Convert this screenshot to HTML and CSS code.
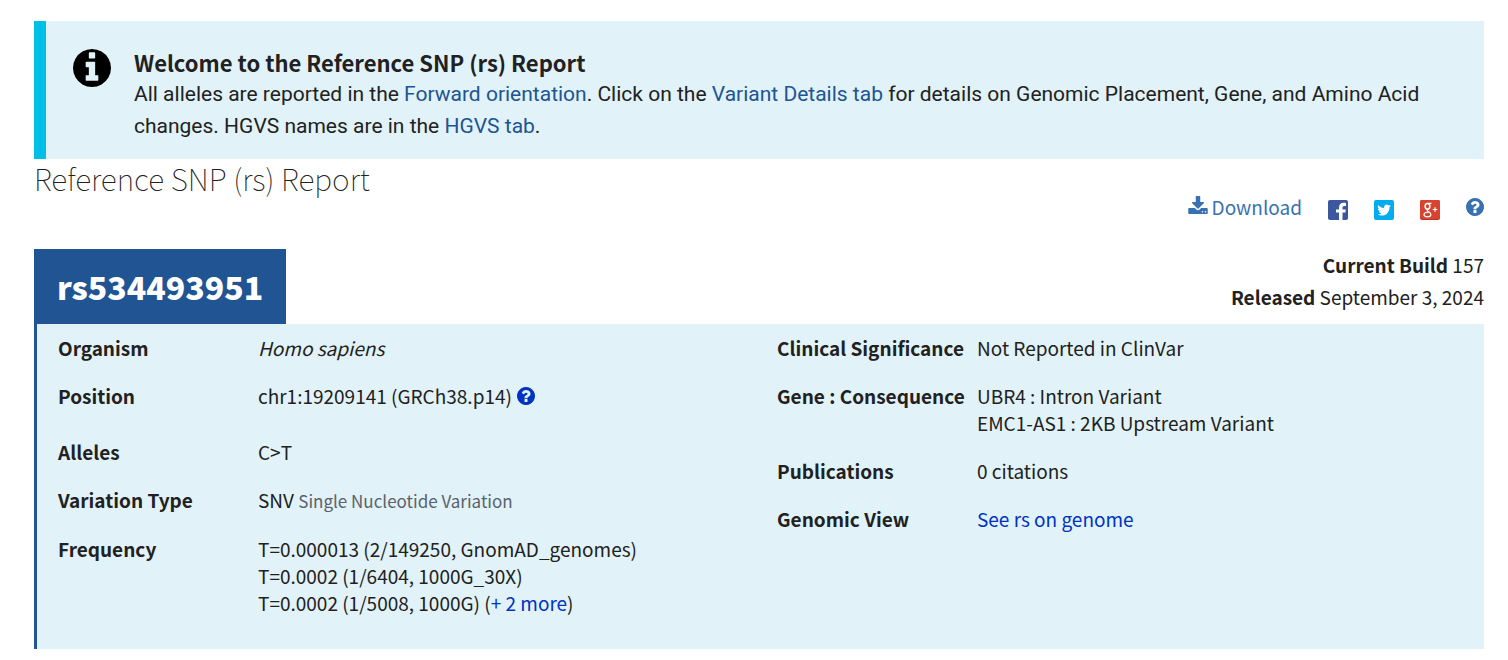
FILE: index.html
```
<!DOCTYPE html>
<html lang="en">
<head>
<meta charset="utf-8">
<meta name="viewport" content="width=device-width, initial-scale=1">
<title>rs534493951 - Reference SNP (rs) Report</title>
<link rel="stylesheet" href="styles.css">
</head>
<body>
<svg class="sprite" aria-hidden="true">
  <symbol id="question" viewBox="0 128 1536 1536"><path d="M896 1376v-192q0-14-9-23t-23-9h-192q-14 0-23 9t-9 23v192q0 14 9 23t23 9h192q14 0 23-9t9-23zm256-672q0-88-55.5-163t-138.5-116-170-41q-243 0-371 213-15 24 8 42l132 100q7 6 19 6 16 0 25-12 53-68 86-92 34-24 86-24 48 0 85.5 26t37.5 59q0 38-20 61t-68 45q-63 28-115.5 86.5t-52.5 125.5v36q0 14 9 23t23 9h192q14 0 23-9t9-23q0-19 21.5-49.5t54.5-49.5q32-18 49-28.5t46-35 44.5-48 28-60.5 12.5-81zm384 192q0 209-103 385.5t-279.5 279.5-385.5 103-385.5-103-279.5-279.5-103-385.5 103-385.5 279.5-279.5 385.5-103 385.5 103 279.5 279.5 103 385.5z"/></symbol>
</svg>
<main class="page">
  <section class="banner">
    <svg class="banner-icon" viewBox="0 128 1536 1536" aria-hidden="true"><path d="M1024 1376v-160q0-14-9-23t-23-9h-96v-512q0-14-9-23t-23-9h-320q-14 0-23 9t-9 23v160q0 14 9 23t23 9h96v320h-96q-14 0-23 9t-9 23v160q0 14 9 23t23 9h448q14 0 23-9t9-23zm-128-896v-192q0-14-9-23t-23-9h-192q-14 0-23 9t-9 23v192q0 14 9 23t23 9h192q14 0 23-9t9-23zm640 416q0 209-103 385.5t-279.5 279.5-385.5 103-385.5-103-279.5-279.5-103-385.5 103-385.5 279.5-279.5 385.5-103 385.5 103 279.5 279.5 103 385.5z"/></svg>
    <div class="banner-body">
      <h2 class="banner-title">Welcome to the Reference SNP (rs) Report</h2>
      <p class="banner-text">All alleles are reported in the <a href="#orientation">Forward orientation</a>. Click on the <a href="#details">Variant Details tab</a> for details on Genomic Placement, Gene, and Amino Acid changes. HGVS names are in the <a href="#hgvs">HGVS tab</a>.</p>
    </div>
  </section>

  <h1 class="report-title">Reference SNP (rs) Report</h1>

  <nav class="toolbar" aria-label="Report actions">
    <a class="download" href="#download">
      <svg class="download-icon" viewBox="0 0 1664 1536" aria-hidden="true"><path d="M1280 1344q0-26-19-45t-45-19-45 19-19 45 19 45 45 19 45-19 19-45zm256 0q0-26-19-45t-45-19-45 19-19 45 19 45 45 19 45-19 19-45zm128-224v320q0 40-28 68t-68 28h-1472q-40 0-68-28t-28-68v-320q0-40 28-68t68-28h465l135 136q58 56 136 56t136-56l136-136h464q40 0 68 28t28 68zm-325-569q17 41-14 70l-448 448q-18 19-45 19t-45-19l-448-448q-31-29-14-70 17-39 59-39h256v-448q0-26 19-45t45-19h256q26 0 45 19t19 45v448h256q42 0 59 39z"/></svg>
      <span>Download</span>
    </a>
    <a class="share" href="#facebook" aria-label="Share on Facebook">
      <svg class="share-icon" viewBox="0 0 20 20"><rect width="20" height="20" rx="2" fill="#3b579d"/><path fill="#fff" d="M11 20v-7.500H8V9.500H11V7.500C11 4.500 12.800 2.800 15.600 2.800c1.200 0 2 .1 2.400.2v2.900h-1.600c-1.500 0-1.900.7-1.900 1.800v1.800h3.300l-.4 3h-2.900V20z"/></svg>
    </a>
    <a class="share" href="#twitter" aria-label="Share on Twitter">
      <svg class="share-icon" viewBox="0 0 20 20"><rect width="20" height="20" rx="2" fill="#00abf0"/><path fill="#fff" transform="translate(2.400 2.400) scale(.0086)" d="M1684 408q-67 98-162 167 1 14 1 42 0 130-38 259.500t-115.500 248.500-184.500 210.500-258 146-323 54.500q-271 0-496-145 35 4 78 4 225 0 401-138-105-2-188-64.500t-114-159.500q33 5 61 5 43 0 85-11-112-23-185.500-111.500t-73.500-205.500v-4q68 38 146 41-66-44-105-115t-39-154q0-88 44-163 121 149 294.500 238.500t371.500 99.500q-8-38-8-74 0-134 94.500-228.500t228.500-94.500q140 0 236 102 109-21 205-78-37 115-142 178 93-10 186-50z"/></svg>
    </a>
    <a class="share" href="#google-plus" aria-label="Share on Google Plus">
      <svg class="share-icon" viewBox="0 0 20 20"><rect width="20" height="20" rx="2" fill="#b93524"/><rect width="20" height="19" rx="2" fill="#d8432f"/><g fill="none" stroke="#fff"><ellipse cx="7.500" cy="6.300" rx="2.400" ry="2.900" stroke-width="1.500"/><path stroke-width="1.200" d="M7.500 3.300h4M8 9.200c-1.200.8-.9 1.500.3 2.300 1.500 1 2.600 1.700 2.600 3 0 1.500-1.500 2.300-3.500 2.300s-3.400-.8-3.400-2.200c0-1.600 1.900-2.500 4.600-2.400M12.700 9.500h4.600M15 7.200v4.600"/></g></svg>
    </a>
    <a class="help" href="#help" aria-label="Help"><svg class="help-icon" aria-hidden="true"><use href="#question"/></svg></a>
  </nav>

  <header class="summary-head">
    <h2 class="rs-id">rs534493951</h2>
    <div class="build">
      <div><strong>Current Build</strong> 157</div>
      <div><strong>Released</strong> September 3, 2024</div>
    </div>
  </header>

  <section class="summary">
    <dl class="facts">
      <div class="fact"><dt>Organism</dt><dd><i>Homo sapiens</i></dd></div>
      <div class="fact fact-tall"><dt>Position</dt><dd class="with-icon"><span>chr1:19209141 (GRCh38.p14)</span><a class="inline-help" href="#position-help" aria-label="Position help"><svg class="help-icon" aria-hidden="true"><use href="#question"/></svg></a></dd></div>
      <div class="fact"><dt>Alleles</dt><dd>C&gt;T</dd></div>
      <div class="fact"><dt>Variation Type</dt><dd>SNV <span class="note">Single Nucleotide Variation</span></dd></div>
      <div class="fact"><dt>Frequency</dt><dd>
        <div>T=0.000013 (2/149250, GnomAD_genomes)</div>
        <div>T=0.0002 (1/6404, 1000G_30X)</div>
        <div>T=0.0002 (1/5008, 1000G) (<a href="#more">+ 2 more</a>)</div>
      </dd></div>
    </dl>
    <dl class="facts">
      <div class="fact"><dt>Clinical Significance</dt><dd>Not Reported in ClinVar</dd></div>
      <div class="fact"><dt>Gene : Consequence</dt><dd>
        <div>UBR4 : Intron Variant</div>
        <div>EMC1-AS1 : 2KB Upstream Variant</div>
      </dd></div>
      <div class="fact"><dt>Publications</dt><dd>0 citations</dd></div>
      <div class="fact"><dt>Genomic View</dt><dd><a href="#genome">See rs on genome</a></dd></div>
    </dl>
  </section>
</main>
</body>
</html>
```
FILE: styles.css
```
* {
  box-sizing: border-box;
}

body {
  margin: 0;
  background: #fff;
  color: #212121;
  font-family: "Noto Sans CJK SC", "Noto Sans", sans-serif;
  font-size: 19px;
  font-weight: 400;
  line-height: 27px;
}

h1, h2, p, dl, dd {
  margin: 0;
}

strong {
  font-weight: 700;
}

a {
  text-decoration: none;
}

svg {
  display: block;
  fill: currentColor;
}

.sprite {
  display: none;
}

.page {
  padding: 21px 24px 11px 34px;
}

.banner {
  display: flex;
  align-items: flex-start;
  gap: 23px;
  padding: 25px 40px 17px 27px;
  border-left: 12px solid #00bfe7;
  background: #e1f2f8;
}

.banner-icon {
  flex: none;
  width: 38px;
  height: 38px;
  margin-top: 3px;
  color: #000;
}

.banner-title {
  font-size: 22px;
  font-weight: 700;
  line-height: 32px;
}

.banner-text {
  font-family: Roboto, sans-serif;
  font-size: 21px;
  line-height: 32px;
}

.banner-text a {
  color: #205493;
}

.report-title {
  font-size: 30px;
  font-weight: 100;
  line-height: 30px;
  padding-top: 4px;
}

.toolbar {
  display: flex;
  justify-content: flex-end;
  align-items: flex-end;
  gap: 26px;
  padding-bottom: 29px;
}

.download {
  display: flex;
  align-items: center;
  gap: 4px;
  color: #3871b0;
}

.download-icon {
  width: 20px;
  height: 18px;
  margin-bottom: 4px;
}

.help {
  align-self: flex-start;
  padding-top: 5px;
  color: #3871b0;
}

.help-icon {
  width: 18px;
  height: 18px;
}

.share-icon {
  width: 20px;
  height: 20px;
}

.summary-head {
  display: flex;
  justify-content: space-between;
}

.rs-id {
  padding: 12px 23px;
  background: #205493;
  color: #fff;
  font-size: 32px;
  font-weight: 900;
  line-height: 51px;
}

.build {
  line-height: 32px;
  text-align: right;
}

.summary {
  display: grid;
  grid-template-columns: 1fr 1fr;
  gap: 12px;
  padding: 10px 0 33px 21px;
  border-left: 3px solid #205493;
  background: #e1f2f8;
}

.summary a {
  color: #0033c1;
}

.facts {
  display: flex;
  flex-direction: column;
  gap: 21px;
}

.fact {
  display: grid;
  grid-template-columns: 200px 1fr;
}

.fact-tall {
  min-height: 35px;
}

.fact dt {
  font-weight: 700;
  white-space: nowrap;
}

.with-icon {
  display: flex;
  align-items: flex-start;
  gap: 5px;
}

.inline-help {
  padding-top: 5px;
}

.note {
  color: #5b616b;
  font-size: 17px;
}
```
